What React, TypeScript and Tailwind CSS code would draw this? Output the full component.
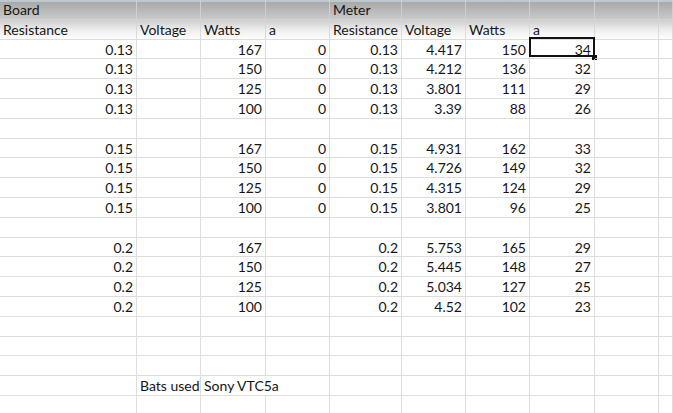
import React from 'react';

type Row = (string | null)[];

// columns: A..J  (A wide, then standard excel widths)
const rows: Row[] = [
  ['Board', null, null, null, 'Meter'],
  ['Resistance', 'Voltage', 'Watts', 'a', 'Resistance', 'Voltage', 'Watts', 'a'],
  ['0.13', null, '167', '0', '0.13', '4.417', '150', '34'],
  ['0.13', null, '150', '0', '0.13', '4.212', '136', '32'],
  ['0.13', null, '125', '0', '0.13', '3.801', '111', '29'],
  ['0.13', null, '100', '0', '0.13', '3.39', '88', '26'],
  [],
  ['0.15', null, '167', '0', '0.15', '4.931', '162', '33'],
  ['0.15', null, '150', '0', '0.15', '4.726', '149', '32'],
  ['0.15', null, '125', '0', '0.15', '4.315', '124', '29'],
  ['0.15', null, '100', '0', '0.15', '3.801', '96', '25'],
  [],
  ['0.2', null, '167', null, '0.2', '5.753', '165', '29'],
  ['0.2', null, '150', null, '0.2', '5.445', '148', '27'],
  ['0.2', null, '125', null, '0.2', '5.034', '127', '25'],
  ['0.2', null, '100', null, '0.2', '4.52', '102', '23'],
  [],
  [],
  [],
  ['BATS'],
  [],
];

const COLS = 10;
const isNum = (v: string) => /^[0-9.]+$/.test(v);

function Cell({ value, selected }: { value: string | null; selected?: boolean }) {
  const num = value != null && isNum(value);
  return (
    <div
      className={
        'relative h-[19.8px] border-r border-b border-[#d4d4d4]/80 px-[3px] leading-[20px] whitespace-nowrap ' +
        (num ? 'text-right' : 'text-left')
      }
    >
      {value}
      {selected && (
        <>
          <div className="pointer-events-none absolute -left-[1px] -top-[3px] right-[-1px] bottom-[1px] border-2 border-[#111]" />
          <div className="absolute -right-[3px] -bottom-[2px] h-[5px] w-[5px] bg-[#111]" />
        </>
      )}
    </div>
  );
}

export default function App() {
  return (
    <div className="relative h-[413px] w-[673px] overflow-hidden bg-[linear-gradient(to_bottom,#a4a6a4_0px,#c6c7c6_18px,#eeeeee_30px,#ffffff_40px)] text-[14px] text-[#161616] [font-family:Lato,'Liberation_Sans',sans-serif]">
      <div className="h-[2px] bg-[#c9d6e2]/70" />
      <div className="-mt-[2px] grid grid-cols-[137px_64px_65px_64px_72px_64px_64px_65px_64px_1fr]">
        {rows.map((r, ri) => {
          if (r[0] === 'BATS') {
            return (
              <React.Fragment key={ri}>
                <Cell value={null} />
                <Cell value="Bats used" />
                <div className="col-span-2 h-[19.8px] border-r border-b border-[#d4d4d4]/80 px-[3px] leading-[20px] whitespace-nowrap">
                  Sony VTC5a
                </div>
                {Array.from({ length: COLS - 4 }).map((_, ci) => (
                  <Cell key={ci} value={null} />
                ))}
              </React.Fragment>
            );
          }
          return Array.from({ length: COLS }).map((_, ci) => (
            <Cell key={ri + '-' + ci} value={r[ci] ?? null} selected={ri === 2 && ci === 7} />
          ));
        })}
      </div>
    </div>
  );
}
